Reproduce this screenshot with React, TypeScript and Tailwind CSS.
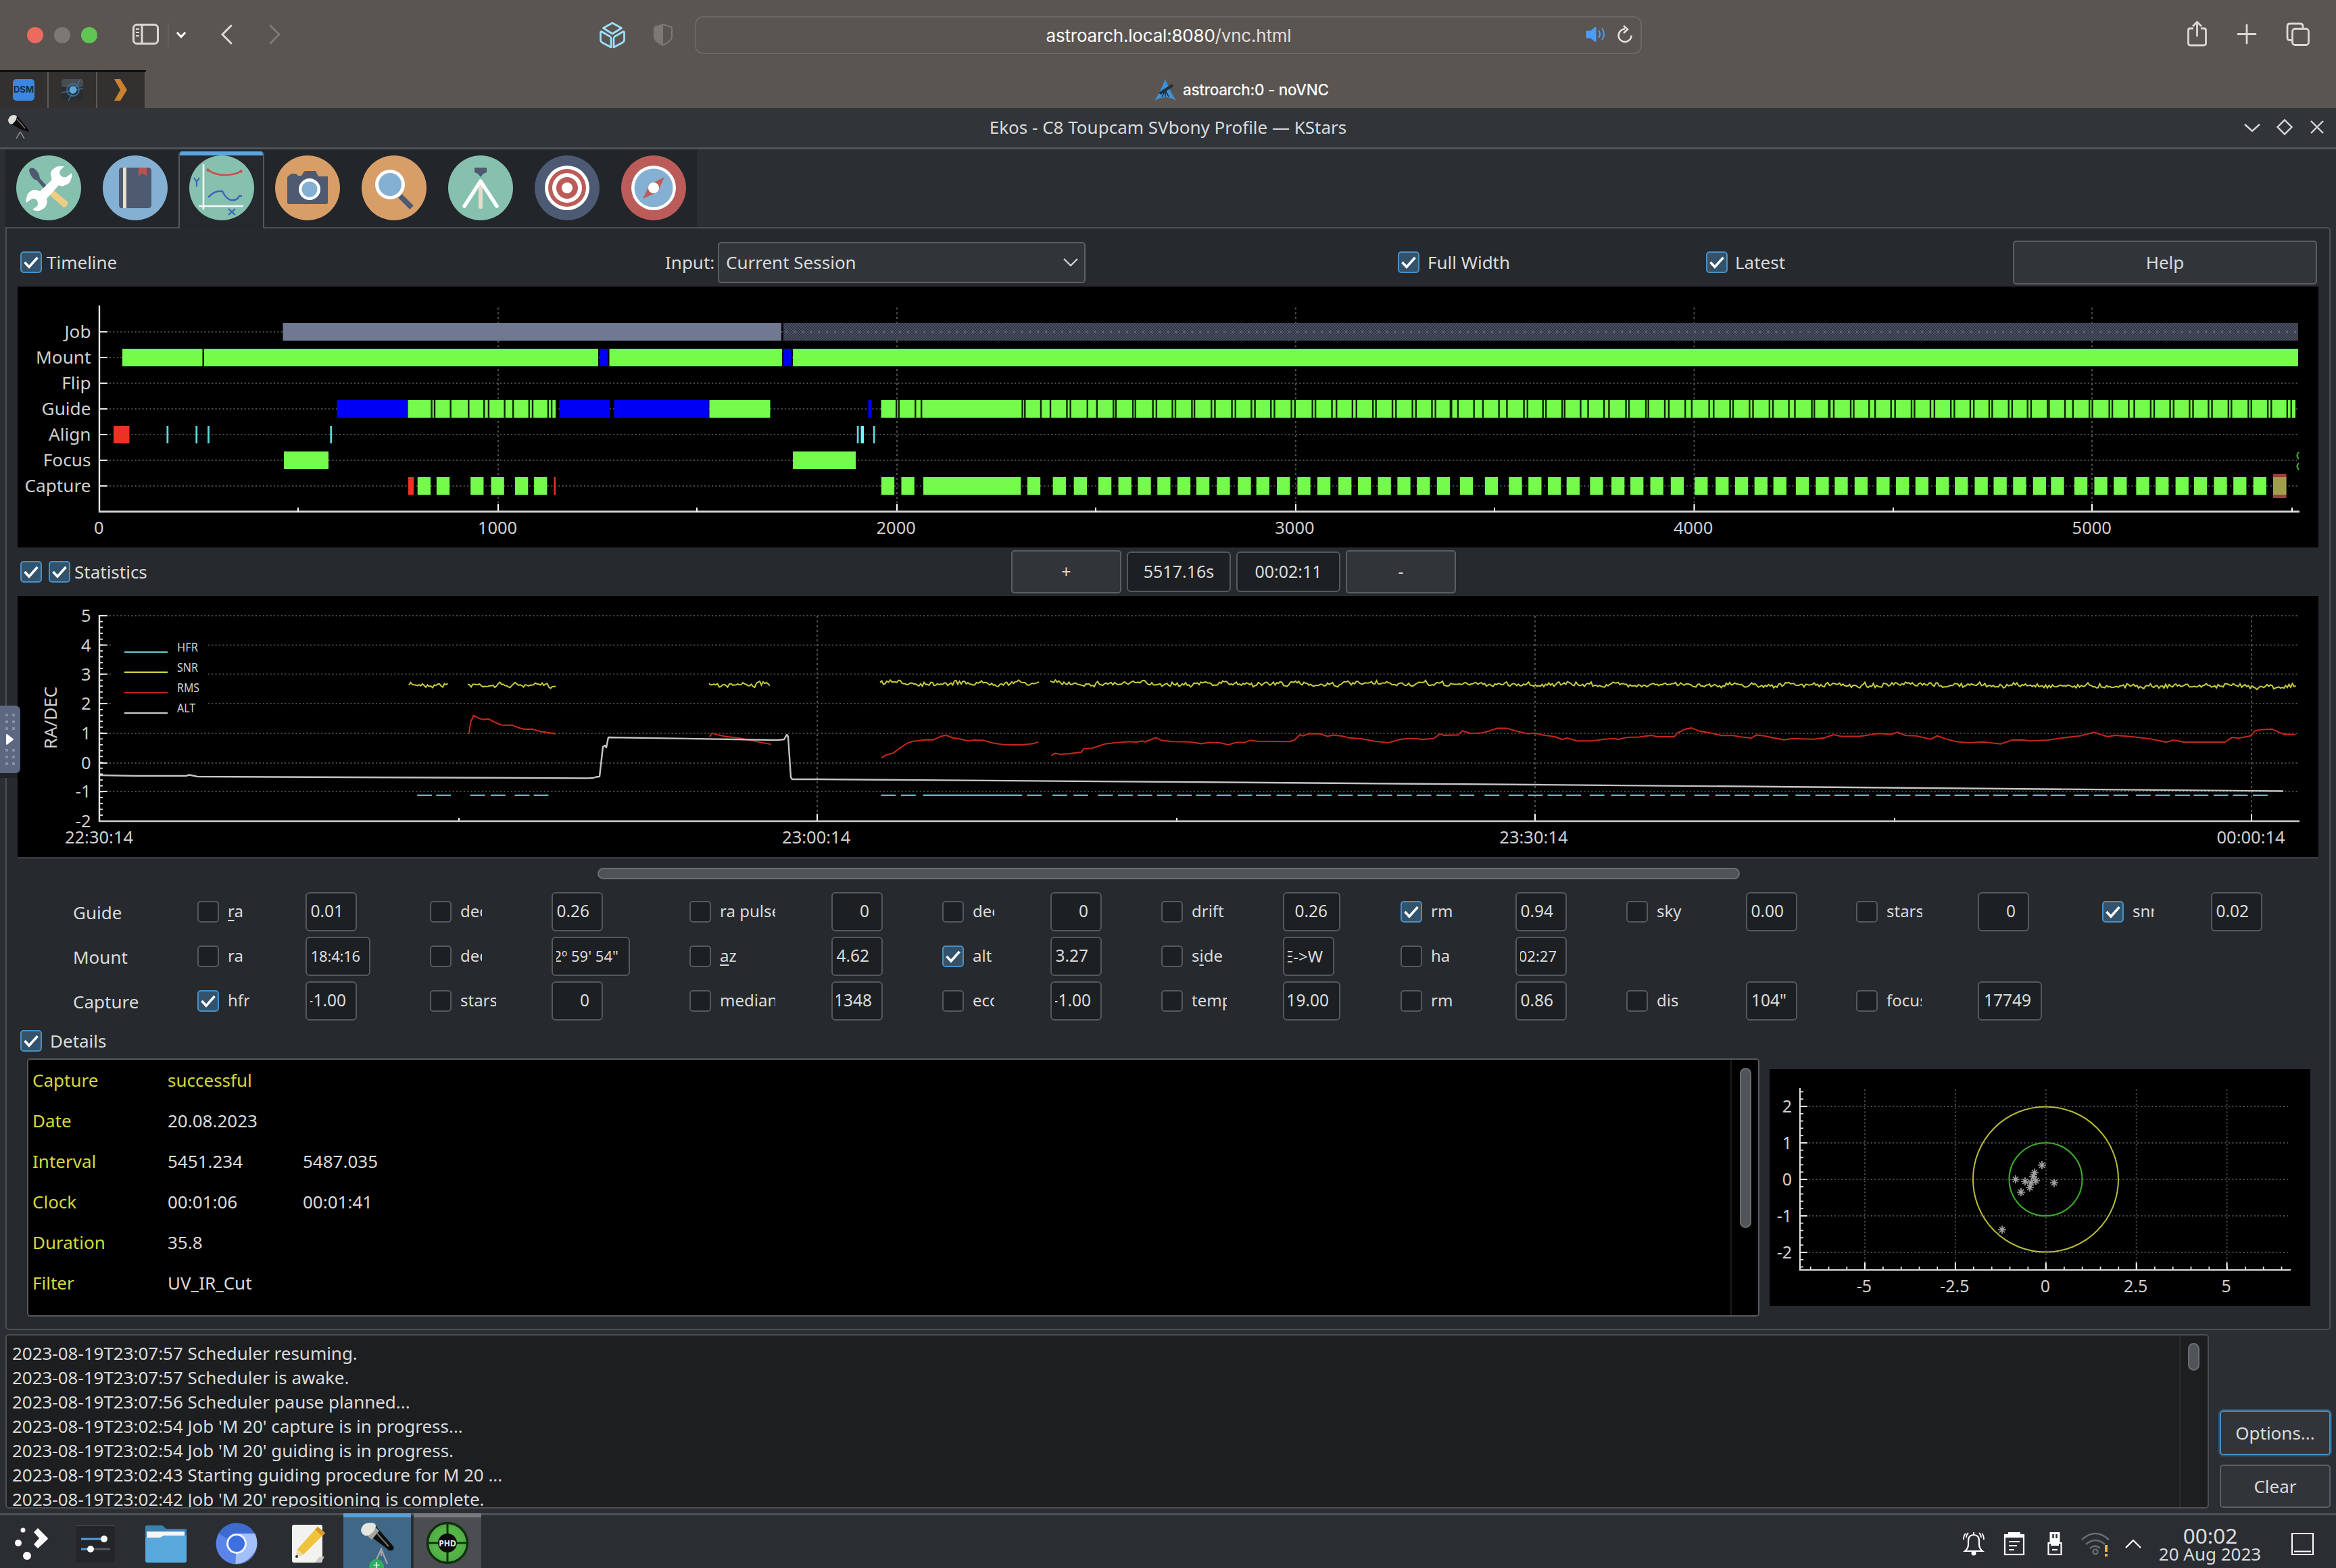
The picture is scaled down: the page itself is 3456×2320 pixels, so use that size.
import React from "react";

type Span = [number, number];

const GREEN = "#75fb4c";
const BLUE = "#0000f5";
const RED = "#eb3223";
const CYAN = "#5fd8dc";

/* ---------- timeline data ---------- */

const left = (v: number) => v / 1.3517;
const mid = (v: number) => 1150 + v / 1.3517;
const right = (v: number) => 2300 + v / 1.3564;

const captureLeft = [835, 873, 941, 982, 1030, 1068];
const captureMid = [
  208, 248, 500, 551, 593, 642, 682, 721, 760, 800, 838, 879, 921, 958, 999, 1040, 1080, 1122, 1161, 1201, 1240,
  1279, 1319, 1365, 1415, 1463, 1502, 1541,
];
const captureRight = [
  24, 71, 114, 152, 192, 233, 281, 323, 362, 401, 439, 484, 524, 562, 602, 646, 685, 724, 765, 803, 843, 881, 920,
  960, 996, 1043, 1083, 1122, 1167, 1206, 1246, 1283, 1323, 1362, 1402,
];
const captures: Span[] = [
  ...captureLeft.map((v): Span => [left(v), left(v) + 19.3]),
  ...captureMid.map((v): Span => [mid(v), mid(v) + 19.3]),
  [mid(292), mid(487)],
  ...captureRight.map((v): Span => [right(v), right(v) + 19.3]),
];

const guideGapsLeft = [863, 869, 901, 937, 968, 977, 1009, 1026, 1058, 1065, 1096, 1103];
const guideGapsMid = [
  238, 243, 276, 288, 490, 495, 527, 546, 579, 586, 620, 639, 672, 677, 711, 716, 751, 758, 790, 796, 829, 834, 868,
  875, 909, 916, 948, 955, 987, 994, 1028, 1035, 1070, 1076, 1109, 1118, 1150, 1158, 1191, 1197, 1230, 1237, 1270,
  1277, 1309, 1316, 1346, 1348, 1361, 1393, 1411, 1443, 1459, 1493, 1500, 1531, 1537,
];
const guideGapsRight = [
  15, 20, 52, 67, 99, 109, 143, 149, 183, 188, 221, 229, 262, 275, 310, 319, 352, 358, 391, 398, 431, 438, 470, 482,
  516, 521, 550, 552, 560, 594, 600, 631, 643, 675, 683, 716, 722, 754, 762, 795, 802, 834, 841, 872, 878, 911, 918,
  949, 956, 989, 992, 1024, 1040, 1073, 1079, 1113, 1119, 1152, 1163, 1196, 1203, 1235, 1242, 1274, 1281, 1312, 1319,
  1352, 1358, 1392, 1398, 1431, 1438, 1470, 1478,
];
const guideGaps = [...guideGapsLeft.map(left), ...guideGapsMid.map(mid), ...guideGapsRight.map(right)];

const timelineRows: [string, number][] = [
  ["Job", 491],
  ["Mount", 529],
  ["Flip", 567],
  ["Guide", 605],
  ["Align", 643],
  ["Focus", 681],
  ["Capture", 719],
];

function Bar({ y, from, to, fill }: { y: number; from: number; to: number; fill: string }) {
  return <rect x={from} y={y - 13} width={to - from} height={26} fill={fill} />;
}

const chartFont = "Noto Sans, sans-serif";

function TimelineChart() {
  return (
    <svg className="block h-[386px] w-[3404px] bg-black" viewBox="26 424 3404 386" fontFamily={chartFont} fontSize="25">
      <defs>
        <pattern id="hatch" width="4" height="4" patternUnits="userSpaceOnUse">
          <rect width="4" height="4" fill="#2f3341" />
          <rect width="2" height="2" fill="#4e5266" />
          <rect x="2" y="2" width="2" height="2" fill="#4e5266" />
        </pattern>
      </defs>
      {timelineRows.map(([name, y]) => (
        <g key={name}>
          <line x1="162" x2="3401" y1={y} y2={y} stroke="#4d4d4d" strokeWidth="2" strokeDasharray="2 3.4" />
          <text x="134.5" y={y + 9} textAnchor="end" fontSize="26.2" fill="#d0d0d0">
            {name}
          </text>
        </g>
      ))}
      {[737, 1327, 1917, 2506.5, 3095].map((x) => (
        <g key={x}>
          <line x1={x} x2={x} y1="455" y2="757" stroke="#4d4d4d" strokeWidth="2" strokeDasharray="3 4" />
          <line x1={x} x2={x} y1="746" y2="757" stroke="#fff" strokeWidth="2" />
        </g>
      ))}
      <Bar y={491} from={418.5} to={1156} fill="#707892" />
      <Bar y={491} from={1159} to={3400} fill="url(#hatch)" />
      <line x1="1162" x2="3400" y1="491" y2="491" stroke="#63677a" strokeWidth="3" strokeDasharray="3 9" />

      <Bar y={529} from={181} to={299.5} fill={GREEN} />
      <Bar y={529} from={302} to={885} fill={GREEN} />
      <Bar y={529} from={887} to={899.5} fill={BLUE} />
      <Bar y={529} from={901.5} to={1157} fill={GREEN} />
      <Bar y={529} from={1159} to={1171} fill={BLUE} />
      <Bar y={529} from={1173} to={3400} fill={GREEN} />

      <Bar y={605} from={498.5} to={603} fill={BLUE} />
      <Bar y={605} from={603.5} to={822} fill={GREEN} />
      <Bar y={605} from={827.5} to={902} fill={BLUE} />
      <Bar y={605} from={908.5} to={1048.5} fill={BLUE} />
      <Bar y={605} from={1049.5} to={1139.5} fill={GREEN} />
      <Bar y={605} from={1284.5} to={1289.5} fill={BLUE} />
      <Bar y={605} from={1303.5} to={3396} fill={GREEN} />
      {guideGaps.map((x) => (
        <rect key={x} x={x - 1.1} y="592" width="2.4" height="26" fill="#0c2306" />
      ))}

      <Bar y={643} from={168} to={191.5} fill={RED} />
      {[left(335), left(393), left(417), left(662), mid(161), mid(193.5)].map((x) => (
        <Bar key={x} y={643} from={x - 1.4} to={x + 1.4} fill={CYAN} />
      ))}
      <Bar y={643} from={mid(167)} to={mid(173)} fill="#75fbfd" />

      <Bar y={681} from={420} to={486} fill={GREEN} />
      <Bar y={681} from={1173} to={1266} fill={GREEN} />
      <path d="M3401 669q-5 5 0 10M3401 685q-5 5 0 10" stroke="#3ba325" strokeWidth="2.4" fill="none" />

      <Bar y={719} from={604} to={612} fill={RED} />
      <Bar y={719} from={819.5} to={822} fill={RED} />
      {captures.map(([a, b]) => (
        <Bar key={a} y={719} from={a} to={b} fill={GREEN} />
      ))}
      <rect x="3363" y="701" width="19.5" height="36" fill="#93443f" />
      <rect x="3363" y="706" width="19.5" height="26" fill="#a0a04c" />

      {timelineRows.map(([name, y]) => (
        <line key={name} x1="147" x2="159" y1={y} y2={y} stroke="#e6e6e6" strokeWidth="2" />
      ))}
      <line x1="147" x2="147" y1="452" y2="758" stroke="#e6e6e6" strokeWidth="2.4" />
      <line x1="146" x2="3402" y1="757" y2="757" stroke="#cfcfcf" strokeWidth="2.8" />
      {[441, 1031, 1621, 2211, 2801, 3391].map((x) => (
        <line key={x} x1={x} x2={x} y1="751" y2="757" stroke="#fff" strokeWidth="2" />
      ))}
      {["0", "1000", "2000", "3000", "4000", "5000"].map((t, i) => (
        <text key={t} x={146.3 + i * 589.7} y="790" textAnchor="middle" fontSize="25.500" fill="#d0d0d0">
          {t}
        </text>
      ))}
    </svg>
  );
}

/* ---------- statistics data ---------- */

const toPath = (pts: number[][], fx: (v: number) => number) =>
  pts.map(([x, y]) => `${fx(x).toFixed(1)} ${(870 + y / 2.24).toFixed(1)}`).join("L");

const rmsA = [[938, 483], [941, 445], [947, 423], [957, 431], [965, 436], [977, 434], [990, 445], [1003, 454], [1025, 455], [1035, 462], [1048, 468], [1065, 468], [1085, 477], [1112, 483]];
const rmsB = [[1419, 493], [1424, 481], [1434, 486], [1450, 492], [1480, 498], [1510, 508], [1542, 518]];
const rmsC = [[208, 563], [218, 553], [232, 547], [246, 530], [260, 514], [272, 508], [298, 503], [312, 503], [328, 491], [338, 488], [352, 497], [368, 501], [382, 507], [392, 504], [412, 505], [432, 514], [452, 519], [470, 520], [490, 520], [510, 516], [522, 511]];
const rmsD = [[548, 556], [555, 548], [566, 551], [585, 549], [608, 544], [613, 532], [628, 532], [655, 517], [675, 513], [705, 509], [718, 511], [730, 507], [735, 510], [757, 496], [768, 505], [790, 509], [825, 510], [848, 516], [862, 512], [885, 513], [902, 520], [918, 512], [935, 512], [945, 505], [960, 508], [1025, 509], [1035, 503], [1045, 486], [1052, 490], [1062, 483], [1085, 483], [1100, 492], [1112, 487], [1130, 491], [1145, 497], [1170, 500], [1195, 508], [1222, 513], [1245, 502], [1262, 499], [1278, 499], [1290, 502], [1312, 499], [1325, 484], [1333, 488], [1362, 487], [1370, 473], [1387, 482], [1410, 480], [1425, 473], [1440, 465], [1458, 465], [1480, 475], [1500, 483], [1515, 481], [1530, 487], [1548, 491]];
const rmsE = [[0, 493], [15, 502], [25, 497], [45, 507], [75, 507], [100, 501], [120, 499], [128, 502], [145, 495], [170, 494], [195, 488], [205, 493], [240, 493], [247, 480], [262, 468], [275, 464], [290, 474], [315, 481], [335, 489], [358, 489], [375, 494], [395, 497], [405, 487], [420, 490], [440, 497], [460, 503], [478, 499], [520, 501], [540, 497], [560, 486], [575, 492], [610, 492], [635, 486], [650, 482], [675, 485], [688, 478], [705, 489], [725, 490], [755, 501], [768, 490], [785, 500], [805, 509], [830, 513], [860, 510], [895, 517], [918, 504], [935, 503], [955, 507], [990, 504], [1018, 497], [1055, 490], [1082, 478], [1110, 493], [1125, 488], [1165, 494], [1195, 500], [1228, 511], [1242, 504], [1265, 511], [1295, 511], [1345, 511], [1360, 495], [1372, 498], [1397, 490], [1405, 474], [1415, 470], [1440, 468], [1462, 484], [1487, 486]];

const rmsPath =
  `M${toPath(rmsA, left)}M${toPath(rmsB, left)}M${toPath(rmsC, mid)}` + `M${toPath(rmsD, mid)}L${toPath(rmsE, right)}`;

function snrPath() {
  let seed = 7;
  const rnd = () => {
    seed = (seed * 16807) % 2147483647;
    return seed / 2147483647 - 0.5;
  };
  const spans: [number, number, number, number][] = [
    [605, 664, 1013, 1013],
    [692, 824, 1013.5, 1014],
    [1049, 1141, 1012.5, 1012.5],
    [1302, 1537, 1010.5, 1010.5],
    [1554, 3398, 1011, 1015],
  ];
  let d = "";
  for (const [a, b, y0, y1] of spans) {
    let drift = 0;
    for (let x = a; x <= b; x += 2.5) {
      drift = drift * 0.7 + rnd() * 3.2;
      const y = y0 + ((y1 - y0) * (x - a)) / (b - a) + drift + rnd() * 5;
      d += `${x === a ? "M" : "L"}${x.toFixed(1)} ${y.toFixed(1)}`;
    }
  }
  return d;
}

const statTicks: [string, number][] = [
  ["5", 911],
  ["4", 954.5],
  ["3", 997.5],
  ["2", 1041],
  ["1", 1085],
  ["0", 1129],
  ["-1", 1171],
  ["-2", 1215],
];

function StatsChart() {
  return (
    <svg className="block h-[386px] w-[3404px] bg-black" viewBox="26 882 3404 386" fontFamily={chartFont} fontSize="25.500">
      {statTicks.slice(0, 7).map(([t, y]) => (
        <line key={t} x1="162" x2="3401" y1={y} y2={y} stroke="#4d4d4d" strokeWidth="2" strokeDasharray="2 3.4" />
      ))}
      {[1209, 2271, 3331].map((x) => (
        <g key={x}>
          <line x1={x} x2={x} y1="911" y2="1214" stroke="#4d4d4d" strokeWidth="2" strokeDasharray="3 4" />
          <line x1={x} x2={x} y1="1204" y2="1214" stroke="#fff" strokeWidth="2" />
        </g>
      ))}
      {[679, 1741, 2803].map((x) => (
        <line key={x} x1={x} x2={x} y1="1210" y2="1214" stroke="#fff" strokeWidth="2" />
      ))}
      <rect x="164" y="940" width="144" height="130" fill="#000" />
      {captures.map(([a, b]) => (
        <line key={a} x1={a - 0.5} x2={b + 2} y1="1176.8" y2="1176.8" stroke="#57b9bd" strokeWidth="2.4" />
      ))}
      <path d={snrPath()} fill="none" stroke="#c9cb3b" strokeWidth="2" />
      <path d={rmsPath} fill="none" stroke="#c2271b" strokeWidth="2.1" strokeLinejoin="round" />
      <path
        d="M148 1147L200 1148L275 1148L280 1146.5L292 1149L870 1151.5L878 1151L882 1149.5L887 1149L892 1105L895 1103L897 1106L900 1091L1150 1095L1160 1094L1164 1087L1166 1090L1170 1150L1172 1153L1209 1153L2270 1161L3378 1170.5"
        fill="none"
        stroke="#c4c4c4"
        strokeWidth="2.4"
        strokeLinejoin="round"
      />
      {Array.from({ length: 36 }, (_, i) => 911 + i * 8.68).map((y) => (
        <line key={y} x1="147" x2="152" y1={y} y2={y} stroke="#e6e6e6" strokeWidth="1.8" />
      ))}
      {statTicks.map(([t, y]) => (
        <g key={t}>
          <line x1="147" x2="159" y1={y} y2={y} stroke="#e6e6e6" strokeWidth="2" />
          <text x="134.5" y={y + 9} textAnchor="end" fill="#d0d0d0">
            {t}
          </text>
        </g>
      ))}
      <line x1="147" x2="147" y1="910" y2="1216" stroke="#e6e6e6" strokeWidth="2.4" />
      <line x1="146" x2="3402" y1="1215" y2="1215" stroke="#cfcfcf" strokeWidth="2.4" />
      {["22:30:14", "23:00:14", "23:30:14", "00:00:14"].map((t, i) => (
        <text key={t} x={146.5 + i * 1061.2} y="1248" textAnchor="middle" fill="#d0d0d0">
          {t}
        </text>
      ))}
      <text transform="translate(84 1062) rotate(-90)" textAnchor="middle" fontSize="26" fill="#d0d0d0">
        RA/DEC
      </text>
      {[
        ["HFR", "#57b9bd"],
        ["SNR", "#c9cb3b"],
        ["RMS", "#c2271b"],
        ["ALT", "#c4c4c4"],
      ].map(([t, c], i) => (
        <g key={t}>
          <line x1="184" x2="248" y1={964.7 + i * 30.1} y2={964.7 + i * 30.1} stroke={c} strokeWidth="2.4" />
          <text x="262" y={963.5 + i * 30.1} fontSize="18" textLength={t === "ALT" ? 27 : t === "RMS" ? 33 : 31} lengthAdjust="spacingAndGlyphs" fill="#d0d0d0">
            {t}
          </text>
        </g>
      ))}
    </svg>
  );
}

function ScatterChart() {
  const points = [[3021, 1724], [3010, 1735], [2982, 1745], [2996, 1748], [3005, 1750], [3012, 1747], [3003, 1757], [2990, 1764], [3039, 1750], [2962, 1819.5], [3008, 1741]];
  return (
    <svg className="block h-[350px] w-[800px] bg-black" viewBox="2618 1582 800 350" fontFamily={chartFont} fontSize="25">
      {[1637, 1691, 1745, 1799, 1853].map((y, i) => (
        <g key={y}>
          <line x1="2676" x2="3385" y1={y} y2={y} stroke="#4d4d4d" strokeWidth="2" strokeDasharray="2 3.4" />
          <line x1="2663" x2="2674" y1={y} y2={y} stroke="#e6e6e6" strokeWidth="2" />
          <text x="2651" y={y + 9} textAnchor="end" fill="#d0d0d0">
            {2 - i}
          </text>
        </g>
      ))}
      {["-5", "-2.5", "0", "2.5", "5"].map((t, i) => {
        const x = 2759 + i * 133.9;
        return (
          <g key={t}>
            <line x1={x} x2={x} y1="1612" y2="1878" stroke="#4d4d4d" strokeWidth="2" strokeDasharray="2 3.4" />
            <line x1={x} x2={x} y1="1868" y2="1879" stroke="#fff" strokeWidth="2" />
            <text x={x - 1} y="1912" textAnchor="middle" fill="#d0d0d0">
              {t}
            </text>
          </g>
        );
      })}
      {Array.from({ length: 27 }, (_, i) => 2678.7 + i * 26.8).map((x) => (
        <line key={x} x1={x} x2={x} y1="1874" y2="1879" stroke="#e6e6e6" strokeWidth="1.8" />
      ))}
      {Array.from({ length: 25 }, (_, i) => 1615.4 + i * 10.8).map((y) => (
        <line key={y} x1="2663" x2="2668" y1={y} y2={y} stroke="#e6e6e6" strokeWidth="1.8" />
      ))}
      <path d="M2663 1610V1879H3389" fill="none" stroke="#e0e0e0" strokeWidth="2.2" />
      <circle cx="3026.5" cy="1745" r="107.5" fill="none" stroke="#b9bb36" strokeWidth="2" />
      <circle cx="3026.5" cy="1745" r="54" fill="none" stroke="#3da92a" strokeWidth="2.2" />
      {points.map(([x, y]) => (
        <path
          key={`${x}-${y}`}
          d={`M${x - 6} ${y}h12M${x} ${y - 6}v12M${x - 4} ${y - 4}l8 8M${x + 4} ${y - 4}l-8 8`}
          stroke="#a4a4a4"
          strokeWidth="1.7"
        />
      ))}
    </svg>
  );
}

/* ---------- controls ---------- */

function Check({ on = false }: { on?: boolean }) {
  return on ? (
    <span className="flex h-8 w-8 shrink-0 items-center justify-center rounded-[5px] border-2 border-[#4a90c4] bg-[#33536c]">
      <svg className="h-6 w-6" viewBox="0 0 24 24" fill="none" stroke="#fcfcfc" strokeWidth="3.6">
        <path d="M2.500 12L9 19L21.500 5" />
      </svg>
    </span>
  ) : (
    <span className="h-8 w-8 shrink-0 rounded-[5px] border-2 border-[#56595c] bg-[#1d2023]" />
  );
}

function Button({ className, children }: { className: string; children: React.ReactNode }) {
  return (
    <div className={`flex items-center justify-center rounded-[5px] border-2 border-[#5b5e62] bg-[#31353a] ${className}`}>
      {children}
    </div>
  );
}

interface Stat {
  label: string;
  mark?: number;
  value: string;
  on?: boolean;
  clip?: string;
  box?: string;
  size?: string;
}

const area = ["w-[160px]", "w-[180px]", "w-[210px]", "w-[160px]", "w-[180px]", "w-[170px]", "w-[177px]", "w-[180px]", "w-[161px]"];
const b76 = "w-[76px] pr-[18px]";
const b76c = "w-[76px] pr-[14px]";
const small = "text-[22px]";

const statRows: { name: string; cells: Stat[] }[] = [
  {
    name: "Guide",
    cells: [
      { label: "ra", mark: 0, value: "0.01", box: b76 },
      { label: "dec", value: "0.26", box: b76, clip: "w-[32px]" },
      { label: "ra pulse", value: "0", box: b76, clip: "w-[82px]" },
      { label: "dec", value: "0", box: b76, clip: "w-[32px]" },
      { label: "drift", value: "0.26", box: "w-[85px] pr-[17px]" },
      { label: "rms", value: "0.94", box: b76, on: true, clip: "w-[32px]" },
      { label: "sky", value: "0.00", box: b76 },
      { label: "stars", value: "0", box: b76, clip: "w-[53px]" },
      { label: "snr", value: "0.02", box: b76, on: true, clip: "w-[32px]" },
    ],
  },
  {
    name: "Mount",
    cells: [
      { label: "ra", value: "18:4:16", box: "w-[96px] pr-[13px]", size: "text-[22px] tracking-[-0.2px]" },
      { label: "dec", value: "-22º 59' 54\"", box: "w-[116px] pr-[15px]", size: small, clip: "w-[32px]" },
      { label: "az", mark: 0, value: "4.62", box: b76 },
      { label: "alt", value: "3.27", box: b76, on: true },
      { label: "side", mark: 1, value: "E->W", box: "w-[76px] pr-[15px]", size: "text-[24px]" },
      { label: "ha", value: "-02:27", box: "w-[76px] pr-[13px]", size: small },
    ],
  },
  {
    name: "Capture",
    cells: [
      { label: "hfr", value: "-1.00", box: b76c, on: true, clip: "w-[32px]" },
      { label: "stars", value: "0", box: b76, clip: "w-[53px]" },
      { label: "median", value: "1348", box: b76c, clip: "w-[82px]" },
      { label: "ecc", value: "-1.00", box: b76c, clip: "w-[32px]" },
      { label: "temp", value: "-19.00", box: "w-[85px] pr-[15px]", clip: "w-[52px]" },
      { label: "rms", value: "0.86", box: b76, clip: "w-[32px]" },
      { label: "dist", value: "104\"", box: b76c, clip: "w-[32px]" },
      { label: "focus", value: "17749", box: "w-[95px] pr-[14px]", clip: "w-[52px]" },
    ],
  },
];

function StatCell({ s, width }: { s: Stat; width: string }) {
  return (
    <div className="flex h-[58px] items-center">
      <div className={`flex items-center gap-[13px] ${width}`}>
        <Check on={s.on} />
        <span className={`overflow-hidden pb-[2px] text-[24px] leading-[36px] whitespace-nowrap ${s.clip ?? ""}`}>
          {s.mark === undefined ? (
            s.label
          ) : (
            <>
              {s.label.slice(0, s.mark)}
              <span className="underline underline-offset-4">{s.label[s.mark]}</span>
              {s.label.slice(s.mark + 1)}
            </>
          )}
        </span>
      </div>
      <div className={`flex h-[58px] rounded-[6px] border-2 border-[#56595c] bg-[#1d2023] pb-[1px] pl-[5px] ${s.box ?? ""}`}>
        <div className={`flex w-full items-center justify-end overflow-hidden whitespace-nowrap ${s.size ?? "text-[24.500px]"}`}>
          <span>{s.value}</span>
        </div>
      </div>
    </div>
  );
}

/* ---------- Ekos module icons ---------- */

const tabIcons: { bg: string; art: React.ReactNode }[] = [
  {
    bg: "#86c0ae",
    art: (
      <>
        <path d="M19 21q2-4 7-2 6 4 8 10l1 5 10 11-4 4-10-12-5-2q-6-6-7-14z" fill="#4d5a70" />
        <path d="M55 51l20 17q3 3 0 6-3 4-6 2L49 58z" fill="#f0cd84" />
        <path
          d="M71 16q-10-1-13 2-8 4-7 11 2 4 1 8L35 53q-5-3-10-2-8 3-9 9-2 4-1 10l8-6q5-1 8 3 2 4 0 8l-7 5q7 4 12 1 8-3 9-9 1-4 0-8l18-20q5 3 9 0 8-2 9-9 2-3 1-9l-8 6q-5 1-8-2-3-3-1-8z"
          fill="#fff"
        />
      </>
    ),
  },
  {
    bg: "#84b0d3",
    art: (
      <>
        <path d="M28 18h39q5 0 5 5v50q0 5-5 5H28q-4 0-4-5V23q0-5 4-5z" fill="#4d5a70" />
        <rect x="30" y="18" width="5" height="60" fill="#e6e0d0" />
        <path d="M53 18h12v13l-6-5-6 5z" fill="#b8544f" />
      </>
    ),
  },
  {
    bg: "#86c0ae",
    art: (
      <>
        <path d="M21 13v67M14 75h66" stroke="#f4faf7" strokeWidth="2.600" />
        <path d="M27 21q11 8 26 8 15 0 24-6" stroke="#c94f45" strokeWidth="2.600" fill="none" strokeLinecap="round" />
        <circle cx="27.500" cy="21.500" r="2.200" fill="#c94f45" />
        <circle cx="76.500" cy="23.500" r="2.200" fill="#c94f45" />
        <path d="M28 62q10-11 21-9 6 12 13 13 9 1 12-6h4" stroke="#3f63bd" strokeWidth="2.600" fill="none" />
        <path d="M7 33l4 6 4-6M11 39v7M58 79l10 9M68 79l-10 9" stroke="#3f63bd" strokeWidth="2.200" fill="none" />
      </>
    ),
  },
  {
    bg: "#d79e68",
    art: (
      <>
        <path d="M18 33q0-2 2-3l4-3h7l3 3h5l3-5q1-2 3-2h15l3 6 1 2h14v38q0 3-2 3H20q-2 0-2-3z" fill="#4d5a70" />
        <circle cx="51" cy="50" r="16" fill="#fff" />
        <circle cx="51" cy="50" r="11.500" fill="#84b0d3" />
      </>
    ),
  },
  {
    bg: "#d79e68",
    art: (
      <>
        <path d="M57 60l17 17" stroke="#4d5a70" strokeWidth="8" />
        <circle cx="42" cy="43" r="22" fill="#fff" />
        <circle cx="42" cy="43" r="17" fill="#84b0d3" />
      </>
    ),
  },
  {
    bg: "#86c0ae",
    art: (
      <>
        <path d="M39 18h18v7l-5 2-4 5-4-5-5-2z" fill="#4d5a70" />
        <path d="M48 40v36" stroke="#e4ddcf" strokeWidth="6" strokeLinecap="round" />
        <path d="M24 75l24-37 24 37" stroke="#fff" strokeWidth="5.500" strokeLinejoin="round" strokeLinecap="round" fill="none" />
      </>
    ),
  },
  {
    bg: "#4d5a73",
    art: (
      <>
        <circle cx="48" cy="48" r="33" fill="#fff" />
        <circle cx="48" cy="48" r="28" fill="#bb5c59" />
        <circle cx="48" cy="48" r="22" fill="#fff" />
        <circle cx="48" cy="48" r="16" fill="#bb5c59" />
        <circle cx="48" cy="48" r="8" fill="#fff" />
      </>
    ),
  },
  {
    bg: "#bb5c59",
    art: (
      <>
        <circle cx="48" cy="48" r="33" fill="#fff" />
        <circle cx="48" cy="48" r="28.500" fill="#84b0d3" />
        <path d="M64 32L54 54 32 64 42 43z" fill="#bb5c59" />
        <circle cx="48" cy="48" r="8" fill="#fff" />
      </>
    ),
  },
];

/* ---------- browser chrome ---------- */

function SafariHeader() {
  return (
    <header className="flex h-[160px] shrink-0 flex-col bg-[#5a5551] font-['Inter',sans-serif]">
      <div className="flex h-[104px] items-center">
        <div className="flex w-[196px] gap-4 pl-10">
          <span className="h-6 w-6 rounded-full bg-[#ed6a5e]" />
          <span className="h-6 w-6 rounded-full bg-[#7d7874]" />
          <span className="h-6 w-6 rounded-full bg-[#61c554]" />
        </div>
        <svg className="h-[60px] w-[240px]" viewBox="196 22 240 60" fill="none" stroke="#dcd8d5" strokeWidth="3">
          <rect x="197.500" y="36.500" width="36" height="28" rx="5" />
          <path d="M210 36v28" />
          <path d="M201 43h5M201 48h5M201 53h5" strokeWidth="2" />
          <path d="M249 34v36" stroke="#6b6662" strokeWidth="1.5" />
          <path d="M262 48l6 6.500 6-6.500" stroke="#fff" />
          <path d="M342 38l-13 13 13 13" strokeLinecap="round" />
          <path d="M400 38l13 13-13 13" stroke="#7e7975" strokeLinecap="round" />
        </svg>
        <svg className="ml-[448px] h-[60px] w-[120px]" viewBox="884 22 120 60" fill="none">
          <g stroke="#9fe0fb" strokeWidth="2.700" strokeLinejoin="round">
            <path d="M906 34l13.500 7.500L906 50l-13.500-8.500z" />
            <path d="M888.500 48q0-2 2-1l12 7q1.500 1 1.500 3v13l-13-7q-2.500-1.500-2.500-4z" />
            <path d="M923.500 48q0-2-2-1l-12 7q-1.500 1-1.500 3v13l13-7q2.500-1.500 2.500-4z" />
          </g>
          <path d="M981 36l12 4q1 .5 1 2v12q0 7-13 13-13-6-13-13V42q0-1.500 1-2z" stroke="#7d7874" strokeWidth="2" />
          <path d="M981 36v31q-13-6-13-13V42q0-1.500 1-2z" fill="#7d7874" />
        </svg>
        <div className="relative ml-[24px] flex h-14 w-[1401px] items-center justify-center rounded-xl border-2 border-[#6c6763] pl-[1px] text-[26px] tracking-[-0.2px] text-white">
          <span>
            astroarch.local:8080<span className="text-[#e0dedc]">/vnc.html</span>
          </span>
          <svg className="absolute right-[8px] top-[8px] h-[34px] w-[76px]" viewBox="2343 34 76 34" fill="none">
            <path d="M2347 46h6l8-6v22l-8-6h-6z" fill="#4a9df8" stroke="#4a9df8" strokeLinejoin="round" />
            <path d="M2365 45q4 5.500 0 11M2370 42q6 8.500 0 17" stroke="#4a9df8" strokeWidth="2" />
            <path d="M2404 43a9.500 9.500 0 1 0 9.500 9.500M2402 38l6 5.500-6 5.500" stroke="#e6e3e0" strokeWidth="2.400" />
          </svg>
        </div>
        <svg className="ml-[801px] h-[60px] w-[200px]" viewBox="3230 22 200 60" fill="none" stroke="#dcd8d5" strokeWidth="2.800">
          <path d="M3245 42h-5q-2.500 0-2.500 3v19q0 3 3 3h20q3 0 3-3V45q0-3-2.500-3h-5M3250.500 54V33M3244 39l6.500-6.500 6.500 6.500" />
          <path d="M3311 50.500h26M3324 37v27" strokeLinecap="round" />
          <rect x="3391.500" y="42.500" width="24" height="24" rx="4" />
          <path d="M3391 59.500h-3q-4 0-4-4V39q0-4 4-4h15q4 0 4 4v3" />
        </svg>
      </div>
      <div className="flex h-14 items-stretch">
        <div className="flex border-t-2 border-black bg-[#33312f]">
          <div className="flex w-[72px] items-center justify-center border-r-2 border-[#5e5955]">
            <span className="flex h-8 w-8 items-center justify-center rounded-[5px] bg-[#3a86e0] text-[13px] font-bold text-[#1d2c45]">
              DSM
            </span>
          </div>
          <div className="flex w-[72px] items-center justify-center border-r-2 border-[#5e5955]">
            <svg className="h-8 w-8" viewBox="0 0 32 32">
              <rect width="32" height="32" rx="4" fill="#2a2d30" />
              <rect width="32" height="12" rx="4" fill="#4a4d50" />
              <path d="M28 0L10 32M0 20L32 14" stroke="#3a6f9f" strokeWidth="1.500" />
              <circle cx="17" cy="16" r="9" fill="none" stroke="#3a6f9f" strokeWidth="1.800" />
              <circle cx="17" cy="16" r="5.500" fill="#5aa7dc" />
            </svg>
          </div>
          <div className="flex w-[72px] items-center justify-center border-r-2 border-[#5e5955]">
            <svg className="h-8 w-5" viewBox="0 0 20 32">
              <path d="M0 0h9l10 16L9 32H0l9-16z" fill="#c98232" />
            </svg>
          </div>
        </div>
        <div className="flex flex-1 items-center gap-[10px] pt-[2px] pl-[1492px] text-[22.5px] font-medium tracking-[-0.3px] text-white">
          <svg className="h-8 w-8" viewBox="0 0 32 32">
            <path d="M16 0Q22 16 32 32q-8-5-16-5T0 32Q10 16 16 0z" fill="#3f92d4" />
            <path d="M6 20L26 7l2 4L9 23z" fill="#1d3143" />
            <path d="M16 17l-5 9M16 17l5 9M16 17v9" stroke="#1d3143" strokeWidth="1.600" />
          </svg>
          astroarch:0 - noVNC
        </div>
      </div>
    </header>
  );
}

function TitleTelescope() {
  return (
    <svg className="h-[40px] w-[36px]" viewBox="10 168 36 40">
      <path d="M30 194l-6 10M30 194l6 10" stroke="#8a8a8a" strokeWidth="1.500" />
      <path d="M16 182l10-11 17 21-1 2-4-1-8-3z" fill="#0d0d0d" />
      <path d="M25 175l12 14" stroke="#777" strokeWidth="1.600" />
      <path d="M16 183q-4-2-4-7 2-6 8-7 4 0 5 3-1 5-4 8-2 3-5 3z" fill="#dededa" />
    </svg>
  );
}

function TaskTelescope() {
  return (
    <svg className="h-[66px] w-[56px]" viewBox="0 0 56 66">
      <path d="M34 42L24 64M34 42l9 22M34 40v12" stroke="#a5a5a5" strokeWidth="2.200" />
      <path d="M14 20L26 8l26 30q2 4-2 6-5 1-8-3z" fill="#0e0e0e" />
      <path d="M13 22l12-13 6 6-11 13z" fill="#a5a59e" />
      <path d="M4 14Q6 3 18 3q8 0 8 5-2 8-8 12-4 3-8 2-6-3-6-8z" fill="#e6e6e0" />
      <path d="M27 18l18 20" stroke="#777" strokeWidth="2" />
    </svg>
  );
}

function TitleBar() {
  return (
    <div className="flex h-[61px] shrink-0 items-center justify-between border-b-[3px] border-[#4f5357] bg-[#31353a] pr-4 pb-[1px] pl-[10px]">
      <TitleTelescope />
      <span className="ml-[90px]">Ekos - C8 Toupcam SVbony Profile — KStars</span>
      <svg className="h-[30px] w-[120px]" viewBox="3320 174 120 30" fill="none" stroke="#d8dadb" strokeWidth="2.400">
        <path d="M3321 184l11 10 11-10" />
        <path d="M3380 177.500l10.500 10.500-10.500 10.500-10.500-10.500z" />
        <path d="M3419 179l18 18M3437 179l-18 18" />
      </svg>
    </div>
  );
}

function ModuleTabs() {
  return (
    <div className="relative z-10 flex h-[115px] shrink-0 pl-[8px]">
      <div className="flex bg-[#222529] pt-[3px]">
        {tabIcons.map((t, i) => (
          <div
            key={i}
            className={
              i === 2
                ? "mb-[-2px] flex w-[127px] flex-col items-center overflow-hidden rounded-t-[5px] border-x-2 border-x-[#54575b] bg-[#25282c]"
                : i < 2
                  ? "flex w-[128px] justify-center pt-[6px]"
                  : "flex w-[128px] justify-center pt-[6px]"
            }
          >
            {i === 2 && <div className="h-[6px] w-[127px] shrink-0 bg-[#5ba6e0]" />}
            <svg className="h-[96px] w-[96px] shrink-0" viewBox="0 0 96 96">
              <circle cx="48" cy="48" r="48" fill={t.bg} />
              {t.art}
            </svg>
          </div>
        ))}
      </div>
    </div>
  );
}

/* ---------- analyze pane ---------- */

const details: string[][] = [
  ["Capture", "successful"],
  ["Date", "20.08.2023"],
  ["Interval", "5451.234", "5487.035"],
  ["Clock", "00:01:06", "00:01:41"],
  ["Duration", "35.8"],
  ["Filter", "UV_IR_Cut"],
];

function AnalyzePane() {
  return (
    <section className="mx-[8px] flex h-[1632px] shrink-0 flex-col rounded-[5px] rounded-tl-none border-2 border-[#4b4e52] bg-[#26292d] pl-[16px]">
      <div className="flex h-[86px] shrink-0 items-center pt-[14px]">
        <div className="flex w-[958px] items-center gap-[7px] pl-1">
          <Check on />
          <span>Timeline</span>
        </div>
        <div className="flex w-[78px] shrink-0">Input:</div>
        <div className="flex h-[61px] w-[544px] shrink-0 items-center justify-between rounded-[5px] border-2 border-[#5b5e62] bg-[#31353a] pr-[8px] pl-[10px]">
          Current Session
          <svg className="h-4 w-6" viewBox="0 0 24 16" fill="none" stroke="#d8dadb" strokeWidth="2.200">
            <path d="M2 3l10 10L22 3" />
          </svg>
        </div>
        <div className="ml-[462px] flex w-[456px] shrink-0 items-center gap-[12px]">
          <Check on />
          Full Width
        </div>
        <div className="flex w-[454px] shrink-0 items-center gap-[11px]">
          <Check on />
          Latest
        </div>
        <Button className="h-[65px] w-[450px] shrink-0">Help</Button>
      </div>

      <TimelineChart />

      <div className="flex h-[72px] shrink-0 items-center">
        <div className="flex w-[1470px] items-center pl-1">
          <Check on />
          <span className="w-[10px]" />
          <Check on />
          <span className="pl-[6px]">Statistics</span>
        </div>
        <div className="flex items-center gap-2 text-[25px]">
          <Button className="h-[64px] w-[163px]">+</Button>
          <div className="flex h-[60px] w-[154px] items-center justify-center rounded-[6px] border-2 border-[#56595c] bg-[#1d2023]">
            5517.16s
          </div>
          <div className="flex h-[60px] w-[154px] items-center justify-center rounded-[6px] border-2 border-[#56595c] bg-[#1d2023]">
            00:02:11
          </div>
          <Button className="h-[64px] w-[163px]">-</Button>
        </div>
      </div>

      <StatsChart />
      <div className="h-[3px] w-[3404px] shrink-0 bg-[#34383c]" />
      <div className="flex h-[49px] shrink-0 pt-[13px] pl-[858px]">
        <div className="h-[17px] w-[1690px] rounded-full border-2 border-[#6b6e71] bg-[#505458]" />
      </div>

      <div className="flex shrink-0 flex-col gap-2">
        {statRows.map((row) => (
          <div
            key={row.name}
            className="grid h-[58px] grid-cols-[184px_344px_384px_374px_324px_354px_334px_340px_364px_240px] items-center pl-[82px]"
          >
            <span className="pt-[3px]">{row.name}</span>
            {row.cells.map((s, i) => (
              <StatCell key={i} s={s} width={area[i]} />
            ))}
          </div>
        ))}
      </div>

      <div className="flex h-[56px] shrink-0 items-center gap-[12px] pt-[4px] pl-1">
        <Check on />
        <span>Details</span>
      </div>

      <div className="flex pl-[14px]">
        <div className="flex h-[382px] w-[2563px] justify-between rounded-[5px] border-2 border-[#56595c] bg-black">
          <div className="flex flex-col pl-[6px]">
            {details.map((d, i) => (
              <div key={d[0]} className="grid h-[60px] grid-cols-[200px_200px_200px] items-center">
                <span className="text-[#d6d83a]">{d[0]}</span>
                <span className={i === 0 ? "text-[#d6d83a]" : ""}>{d[1]}</span>
                <span>{d[2]}</span>
              </div>
            ))}
          </div>
          <div className="w-[41px] border-l-2 border-[#1c1d1f] pt-[12px] pl-[12px]">
            <div className="h-[237px] w-[17px] rounded-full border-2 border-[#6b6e71] bg-[#505458]" />
          </div>
        </div>
        <div className="mt-4 ml-[15px]">
          <ScatterChart />
        </div>
      </div>
    </section>
  );
}

const logLines = [
  "2023-08-19T23:07:57 Scheduler resuming.",
  "2023-08-19T23:07:57 Scheduler is awake.",
  "2023-08-19T23:07:56 Scheduler pause planned...",
  "2023-08-19T23:02:54 Job 'M 20' capture is in progress...",
  "2023-08-19T23:02:54 Job 'M 20' guiding is in progress.",
  "2023-08-19T23:02:43 Starting guiding procedure for M 20 ...",
  "2023-08-19T23:02:42 Job 'M 20' repositioning is complete.",
];

function LogArea() {
  return (
    <div className="mt-[6px] flex h-[258px] shrink-0 pl-[8px]">
      <div className="flex w-[3260px] justify-between overflow-hidden rounded-[5px] border-2 border-[#4b4e52] bg-[#1c1e20]">
        <div className="h-[254px] overflow-hidden pt-[8px] pl-[8px] tracking-[-0.03px]">
          {logLines.map((l) => (
            <div key={l} className="h-9 leading-9 whitespace-nowrap">
              {l}
            </div>
          ))}
        </div>
        <div className="w-[42px] border-l-2 border-[#2a2d30] pt-[11px] pl-[11px]">
          <div className="h-[41px] w-[17px] rounded-full border-2 border-[#6b6e71] bg-[#505458]" />
        </div>
      </div>
      <div className="ml-4 flex flex-col gap-[14px] pt-[113px]">
        <Button className="h-[66px] w-[164px] border-[#4590c9] outline-2 outline-[#30536e]">Options...</Button>
        <Button className="h-[64px] w-[164px]">Clear</Button>
      </div>
    </div>
  );
}

function Taskbar() {
  return (
    <footer className="mt-[7px] flex h-[81px] shrink-0 justify-between border-t-[3px] border-[#4f5357] bg-[#2a2d32]">
      <div className="flex">
        <svg className="h-[78px] w-[508px]" viewBox="0 2242 508 78">
          <g fill="#fcfcfc">
            <circle cx="34" cy="2264" r="3.500" />
            <circle cx="27" cy="2283" r="5" />
            <circle cx="40" cy="2302" r="6" />
            <path d="M50 2267l6-6 14 14q1.500 1.500 0 3l-14 13-6-6 8-9z" />
          </g>
          <rect x="113" y="2256" width="57" height="56" rx="3" fill="#232529" />
          <path d="M113 2257h57" stroke="#3d4043" strokeWidth="2" />
          <path d="M120 2277h34" stroke="#4c9fdc" strokeWidth="3" />
          <path d="M120 2292h12" stroke="#4c9fdc" strokeWidth="3" />
          <path d="M134 2292h29" stroke="#565a5e" strokeWidth="3" />
          <circle cx="154" cy="2277" r="5" fill="#fff" />
          <circle cx="134" cy="2292" r="5" fill="#fff" />
          <path d="M215 2259q0-2 2-2h23l6 5h28q2 0 2 2v14h-61z" fill="#3a81b0" />
          <path d="M217 2266h56v14h-56z" fill="#f6f6f6" />
          <path d="M215 2275h22l5-3h34v37q0 3-3 3h-55q-3 0-3-3z" fill="#5aa9dd" />
          <circle cx="350" cy="2284" r="30.500" fill="#5b84ea" />
          <path d="M350 2284L323 2269Q334 2253.500 350 2253.500q18 0 27 16h-27z" fill="#3e6bd0" />
          <path d="M350 2269h27.500q7 18-3 30-10 14-26 15z" fill="#a4c0fa" />
          <circle cx="350" cy="2284" r="15" fill="#eef3ff" />
          <circle cx="350" cy="2284" r="12" fill="#3d6fe0" />
          <rect x="432" y="2256" width="45" height="56" rx="3" fill="#f2f2f0" />
          <path d="M470 2259l11 9-32 32-12 5 3-13z" fill="#f0c33c" />
          <path d="M470 2259l11 9-4 5-11-10z" fill="#d99a25" />
          <path d="M440 2292l9 8-12 5z" fill="#e8d8b0" />
          <circle cx="439" cy="2303" r="2" fill="#333" />
          <path d="M466 2312h9l5-9q-8 0-9 2z" fill="#c9c9c4" />
        </svg>
        <div className="relative mt-[-3px] flex h-[81px] w-[100px] justify-center overflow-hidden border-t-[6px] border-[#5aa0d6] bg-[#3f6886] pt-[5px]">
          <TaskTelescope />
          <span className="absolute top-[62px] left-[38px] flex h-[22px] w-[22px] items-start justify-center rounded-full bg-[#2fae62] text-[18px] leading-[16px] text-white">
            +
          </span>
        </div>
        <div className="mt-[-3px] ml-[4px] flex h-[81px] w-[100px] justify-center border-t-[6px] border-[#77797c] bg-[#4b4d51] pt-[6px]">
          <svg className="h-[64px] w-[64px]" viewBox="0 0 64 64">
            <circle cx="32" cy="32" r="29.500" fill="#4fae44" stroke="#12300f" strokeWidth="3.500" />
            <circle cx="32" cy="32" r="18" fill="none" stroke="#55b348" strokeWidth="10" />
            <path d="M32 2v60M2 32h60" stroke="#12300f" strokeWidth="3" />
            <circle cx="32" cy="32" r="14" fill="#0d0d0d" />
            <text x="32" y="36.500" textAnchor="middle" fontSize="12" fontWeight="700" fontFamily="Noto Sans, sans-serif" fill="#eee">
              PHD
            </text>
          </svg>
        </div>
      </div>
      <div className="flex">
        <svg className="h-[78px] w-[276px]" viewBox="2900 2242 276 78" fill="none" stroke="#fcfcfc" strokeWidth="2.200">
          <path d="M2907 2295h26q-5-4-5-10v-5q0-9-8-9t-8 9v5q0 6-5 10z" />
          <circle cx="2920" cy="2298" r="3.500" fill="#fcfcfc" stroke="none" />
          <path d="M2920 2271v-4M2908 2269q-3 3-3 9M2932 2269q3 3 3 9M2912 2268q-3 3-3 7M2928 2268q3 3 3 7" strokeWidth="1.800" />
          <rect x="2966" y="2271" width="28" height="29" />
          <rect x="2971" y="2267" width="18" height="8" fill="#fcfcfc" stroke="none" />
          <path d="M2966 2273h28" strokeWidth="4" />
          <path d="M2972 2281h16M2972 2287h12M2972 2293h8" />
          <rect x="3032.500" y="2267" width="15" height="16" fill="#fcfcfc" stroke="none" />
          <path d="M3037.500 2270v6M3042.500 2270v6" stroke="#2a2d32" strokeWidth="2.500" />
          <rect x="3030.500" y="2283" width="19" height="17" />
          <path d="M3034 2284.500h12" strokeWidth="5" />
          <path d="M3036 2293h8" />
          <g stroke="#6a6e72" strokeWidth="2.400">
            <path d="M3080 2278q20-18 40 0M3086 2285q14-12 28 0M3092 2291q8-7 15 0" />
            <circle cx="3100" cy="2296" r="3.500" />
          </g>
          <path d="M3116 2286v10M3116 2299v4" stroke="#f0b050" strokeWidth="4" />
          <path d="M3145 2290l11-11 11 11" />
        </svg>
        <div className="flex w-[188px] flex-col items-center pt-[13px]">
          <span className="h-[31px] text-[31.500px] leading-[33px]">00:02</span>
          <span className="h-[26px] pr-[1px] text-[26px] leading-[26px] whitespace-nowrap">20 Aug 2023</span>
        </div>
        <svg className="h-[78px] w-[92px]" viewBox="3364 2242 92 78" fill="none" stroke="#fcfcfc" strokeWidth="2">
          <rect x="3391" y="2269" width="31" height="31" />
          <path d="M3394 2295.500h25" />
        </svg>
      </div>
    </footer>
  );
}

function VncHandle() {
  return (
    <div className="absolute top-[1044px] left-0 z-20">
      <svg className="block h-[107px] w-[31px]" viewBox="0 1044 31 107">
        <path d="M0 1144h26v7H0z" fill="#1f2124" />
        <path d="M0 1044h22q8 0 8 8v84q0 8-8 8H0z" fill="#5b6880" />
        {[1058, 1068, 1078, 1110, 1120, 1130].map((y) => (
          <path key={y} d={`M8 ${y}h4M18 ${y}h4`} stroke="#8490a5" strokeWidth="4" />
        ))}
        <path d="M10 1087l9 7-9 7z" fill="#fff" stroke="#fff" strokeWidth="2" strokeLinejoin="round" />
      </svg>
    </div>
  );
}

export default function App() {
  return (
    <main className="relative flex h-[2320px] w-[3456px] flex-col overflow-hidden bg-[#2b2e33] font-['Noto_Sans',sans-serif] text-[26px] text-[#dadbdc]">
      <SafariHeader />
      <TitleBar />
      <ModuleTabs />
      <AnalyzePane />
      <LogArea />
      <Taskbar />
      <VncHandle />
    </main>
  );
}
